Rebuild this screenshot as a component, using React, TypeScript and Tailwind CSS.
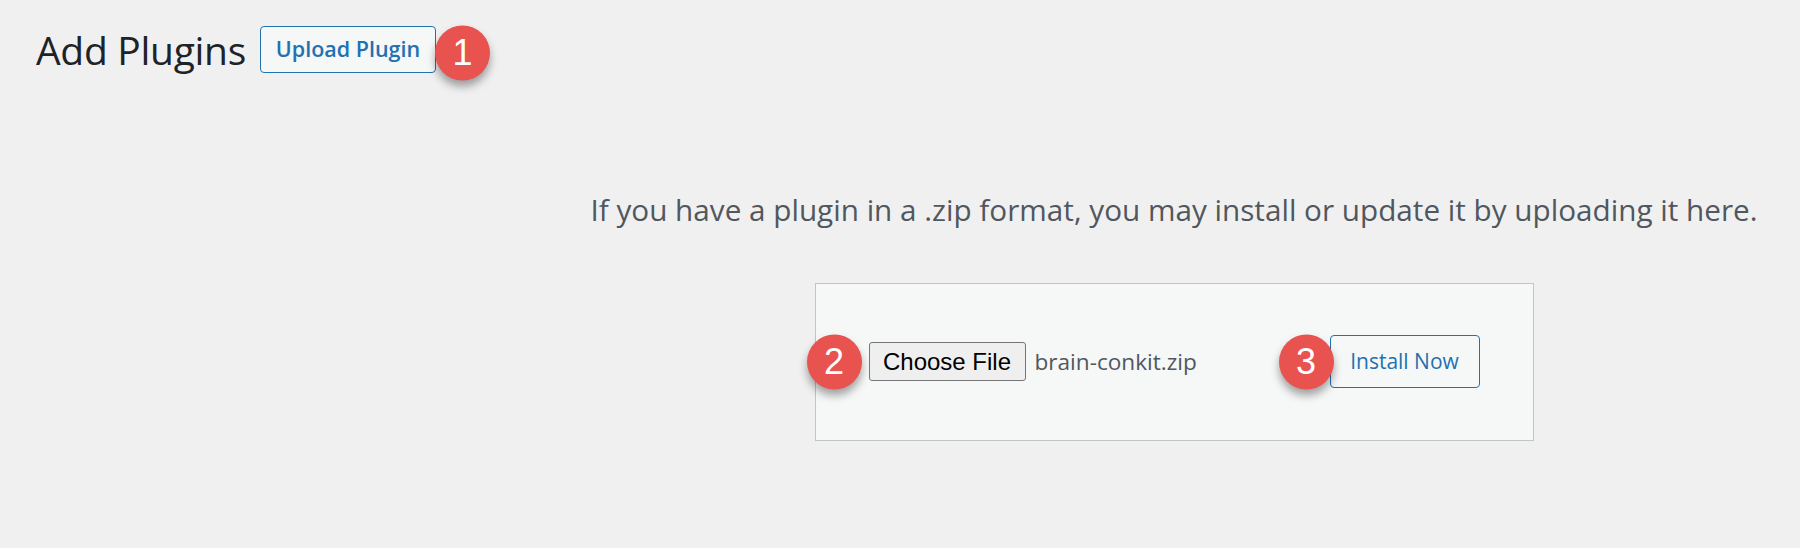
import type { ReactNode } from "react";

type BadgeProps = {
    n: number;
    className: string;
};

// red numbered callout that sits over the ui
const Badge = ({ n, className }: BadgeProps) => {
    return (
        <span
            className={
                "absolute z-10 flex h-[55px] w-[55px] items-center justify-center rounded-full bg-[#e8524f] text-[36px] leading-none text-white shadow-[0_6px_9px_rgba(0,0,0,0.35)] " +
                className
            }
            style={{ fontFamily: '"Liberation Sans", Arial, sans-serif' }}
        >
            {n}
        </span>
    );
};

const Wrap = ({ children }: { children: ReactNode }) => (
    <span className="relative inline-flex">{children}</span>
);

const App = () => {
    return (
        <div
            className="h-[548px] w-[1800px] overflow-hidden bg-[#f0f0f1]"
            style={{ fontFamily: '"Open Sans", "Noto Sans", sans-serif' }}
        >
            <div className="flex items-center pl-[36px] pt-[26px]">
                <h1 className="text-[39px] font-normal leading-none tracking-[-0.3px] text-[#1d2327]">
                    Add Plugins
                </h1>
                <Wrap>
                    <button
                        type="button"
                        className="ml-[14px] h-[47px] w-[176px] rounded-[4px] border border-[#2271b1] bg-[#f6f7f7] text-[21.5px] font-semibold text-[#2271b1]"
                    >
                        Upload Plugin
                    </button>
                    <Badge n={1} className="left-full top-1/2 -ml-px -translate-y-1/2 mt-[3px]" />
                </Wrap>
            </div>

            <div className="ml-[548px] mt-[122px] w-[1252px] text-center">
                <p className="text-[29.7px] leading-none text-[#50575e]">
                    If you have a plugin in a .zip format, you may install or update it by uploading it here.
                </p>

                <div className="mx-auto mt-[58px] flex h-[158px] w-[719px] items-center justify-between border border-[#c3c4c7] bg-[#f6f7f7] px-[53px]">
                    <div className="flex items-center">
                        <Wrap>
                            <Badge n={2} className="right-full top-1/2 mr-[7px] -translate-y-1/2" />
                            <button
                                type="button"
                                className="h-[39px] w-[157px] rounded-[3px] border border-[#767676] bg-[#efefef] text-[24px] text-black"
                                style={{ fontFamily: '"Liberation Sans", Arial, sans-serif' }}
                            >
                                Choose File
                            </button>
                        </Wrap>
                        <span className="ml-[9px] text-[22.6px] text-[#50575e]">brain-conkit.zip</span>
                    </div>

                    <Wrap>
                        <Badge n={3} className="right-full top-1/2 -mr-[4px] -translate-y-1/2" />
                        <button
                            type="button"
                            className="h-[53px] w-[150px] rounded-[4px] border border-[#2271b1] bg-[#f6f7f7] text-[21px] text-[#2271b1]"
                        >
                            Install Now
                        </button>
                    </Wrap>
                </div>
            </div>
        </div>
    );
};

export default App;
